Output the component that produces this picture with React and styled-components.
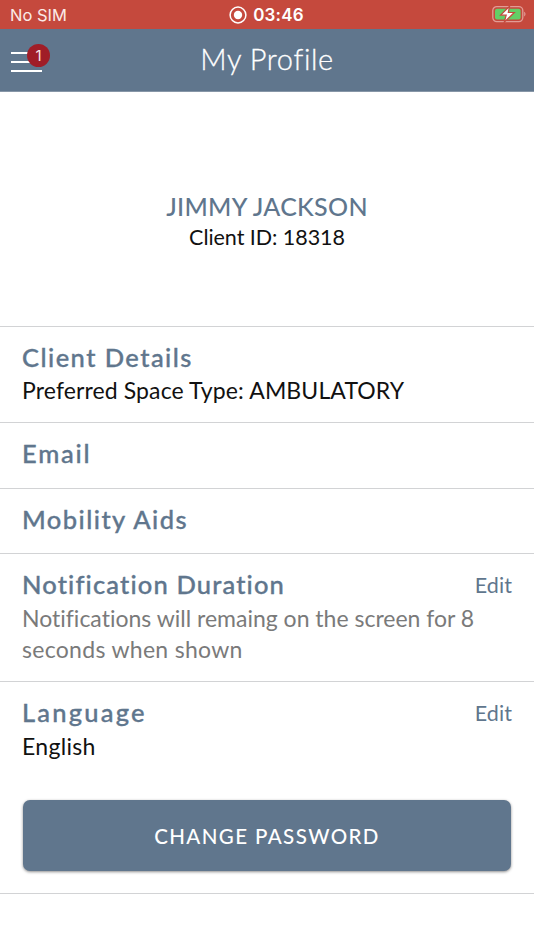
import styled, { createGlobalStyle } from "styled-components";

const slate = "#60768d";

const GlobalStyle = createGlobalStyle`
  * {
    box-sizing: border-box;
  }

  body {
    margin: 0;
    background: #fff;
    font-family: Lato, "Open Sans", sans-serif;
    font-variant-ligatures: none;
    color: #111;
  }
`;

const Page = styled.div`
  width: 100%;
  height: 950px;
  display: flex;
  flex-direction: column;
  overflow: hidden;
`;

const StatusBar = styled.div`
  height: 29px;
  flex: none;
  display: grid;
  grid-template-columns: 1fr auto 1fr;
  align-items: center;
  padding: 0 8px 0 10px;
  background: #c5493d;
  color: #fff;
  font-family: Inter, sans-serif;
`;

const Carrier = styled.span`
  font-size: 16.5px;
  line-height: 20px;
  padding-top: 1px;
  color: #fbe9e7;
`;

const Clock = styled.span`
  display: flex;
  align-items: center;
  gap: 6px;
  margin-right: 3px;
  font-size: 17px;
  line-height: 20px;
  font-weight: 600;
  letter-spacing: 0.2px;
`;

const BatteryIcon = styled.svg`
  justify-self: end;
  margin-bottom: 2px;
`;

const Header = styled.header`
  height: 63px;
  flex: none;
  display: grid;
  grid-template-columns: 60px 1fr 60px;
  align-items: center;
  padding: 0 0 2px;
  background: ${slate};
  border-bottom: 1px solid #8796a7;
  color: #fff;
`;

const MenuButton = styled.button`
  position: relative;
  width: 40px;
  height: 30px;
  margin: 1px 0 0 11px;
  padding: 7px 0 0;
  border: 0;
  background: none;
  display: flex;
  flex-direction: column;
  gap: 7px;
`;

const MenuLine = styled.span`
  width: 31px;
  height: 2px;
  flex: none;
  background: #fff;
`;

const Badge = styled.span`
  position: absolute;
  top: -1px;
  left: 16px;
  width: 23px;
  height: 23px;
  border-radius: 50%;
  background: #a01d27;
  color: #f8e4e5;
  font-family: Inter, sans-serif;
  font-size: 15px;
  line-height: 23px;
  text-align: center;
`;

const Title = styled.h1`
  margin: 0;
  font-size: 29px;
  line-height: 36px;
  font-weight: 300;
  letter-spacing: 0.6px;
  text-align: center;
  -webkit-text-stroke: 0.3px #fff;
`;

const Identity = styled.section`
  height: 234px;
  flex: none;
  padding-top: 98px;
  text-align: center;
`;

const Name = styled.h2`
  margin: 0;
  font-size: 25px;
  line-height: 32px;
  font-weight: 500;
  letter-spacing: 0.3px;
  color: ${slate};
`;

const ClientId = styled.p`
  margin: 0;
  font-size: 21.5px;
  line-height: 31px;
  letter-spacing: -0.05px;
`;

const Section = styled.section`
  height: ${(props) => props.$height}px;
  flex: none;
  padding: 13px 22px 0;
  border-top: 1px solid #d2d3d5;
`;

const SectionHead = styled.div`
  display: flex;
  align-items: center;
  justify-content: space-between;
  height: 34px;
`;

const Heading = styled.h3`
  margin: 0;
  font-size: 25.5px;
  line-height: 34px;
  font-weight: 500;
  letter-spacing: ${(props) => props.$tracking || 1.45}px;
  color: ${slate};
  -webkit-text-stroke: 0.35px ${slate};
`;

const EditLink = styled.button`
  padding: 2px 0 0;
  border: 0;
  background: none;
  color: ${slate};
  font-family: inherit;
  font-size: 21.5px;
  line-height: 30px;
  letter-spacing: 0.1px;
`;

const Text = styled.p`
  margin: ${(props) => props.$gap || 2}px 0 0;
  font-size: 23px;
  line-height: 31px;
  letter-spacing: ${(props) => props.$tracking || 0}px;
  color: ${(props) => (props.$muted ? "#7a7a7a" : "#111")};

  &::first-line {
    letter-spacing: ${(props) => props.$firstTracking ?? props.$tracking}px;
  }
`;

const PasswordButton = styled.button`
  display: block;
  width: 488px;
  height: 71px;
  margin: 38px auto 0;
  padding: 0;
  border: 0;
  border-radius: 7px;
  background: ${slate};
  box-shadow: 0 1px 3px rgba(0, 0, 0, 0.45);
  color: #fff;
  font-family: inherit;
  font-size: 20.5px;
  font-weight: 500;
  letter-spacing: 1.4px;
`;

const Footer = styled.footer`
  flex: 1;
  border-top: 1px solid #d2d3d5;
`;

function RecordIcon() {
  return (
    <svg width="18" height="18" viewBox="0 0 18 18" fill="none">
      <circle cx="9" cy="9" r="7.9" stroke="#fff" strokeWidth="1.5" />
      <circle cx="9" cy="9" r="4.2" fill="#fff" />
    </svg>
  );
}

function Battery() {
  return (
    <BatteryIcon width="34" height="18" viewBox="0 0 34 18">
      <rect x="0.8" y="1.6" width="30" height="15" rx="4" fill="none" stroke="#e29c95" strokeWidth="1.3" />
      <path d="M32.2 6.8c1.7.6 1.7 4 0 4.6z" fill="#e29c95" />
      <rect x="3" y="3.8" width="25.6" height="10.8" rx="2" fill="#63ce66" />
      <path
        d="M17.6 1.2 8.6 10.2h5.6l-1.9 6.9 10-9.6h-6z"
        fill="#fff"
        stroke="#c5493d"
        strokeWidth="1.2"
      />
    </BatteryIcon>
  );
}

function App() {
  return (
    <Page>
      <GlobalStyle />
      <StatusBar>
        <Carrier>No SIM</Carrier>
        <Clock>
          <RecordIcon />
          03:46
        </Clock>
        <Battery />
      </StatusBar>
      <Header>
        <MenuButton aria-label="Menu">
          <MenuLine />
          <MenuLine />
          <MenuLine />
          <Badge>1</Badge>
        </MenuButton>
        <Title>My Profile</Title>
      </Header>
      <Identity>
        <Name>JIMMY JACKSON</Name>
        <ClientId>Client ID: 18318</ClientId>
      </Identity>
      <Section $height={96}>
        <SectionHead>
          <Heading>Client Details</Heading>
        </SectionHead>
        <Text $gap={1} $tracking={0.12}>
          Preferred Space Type: AMBULATORY
        </Text>
      </Section>
      <Section $height={66}>
        <SectionHead>
          <Heading $tracking={1.8}>Email</Heading>
        </SectionHead>
      </Section>
      <Section $height={65}>
        <SectionHead>
          <Heading>Mobility Aids</Heading>
        </SectionHead>
      </Section>
      <Section $height={128}>
        <SectionHead>
          <Heading $tracking={1.15}>Notification Duration</Heading>
          <EditLink>Edit</EditLink>
        </SectionHead>
        <Text $muted $tracking={0.3} $firstTracking={0}>
          Notifications will remaing on the screen for 8 seconds when shown
        </Text>
      </Section>
      <Section $height={212}>
        <SectionHead>
          <Heading $tracking={2.2}>Language</Heading>
          <EditLink>Edit</EditLink>
        </SectionHead>
        <Text $tracking={0.3}>English</Text>
        <PasswordButton>CHANGE PASSWORD</PasswordButton>
      </Section>
      <Footer />
    </Page>
  );
}

export default App;
